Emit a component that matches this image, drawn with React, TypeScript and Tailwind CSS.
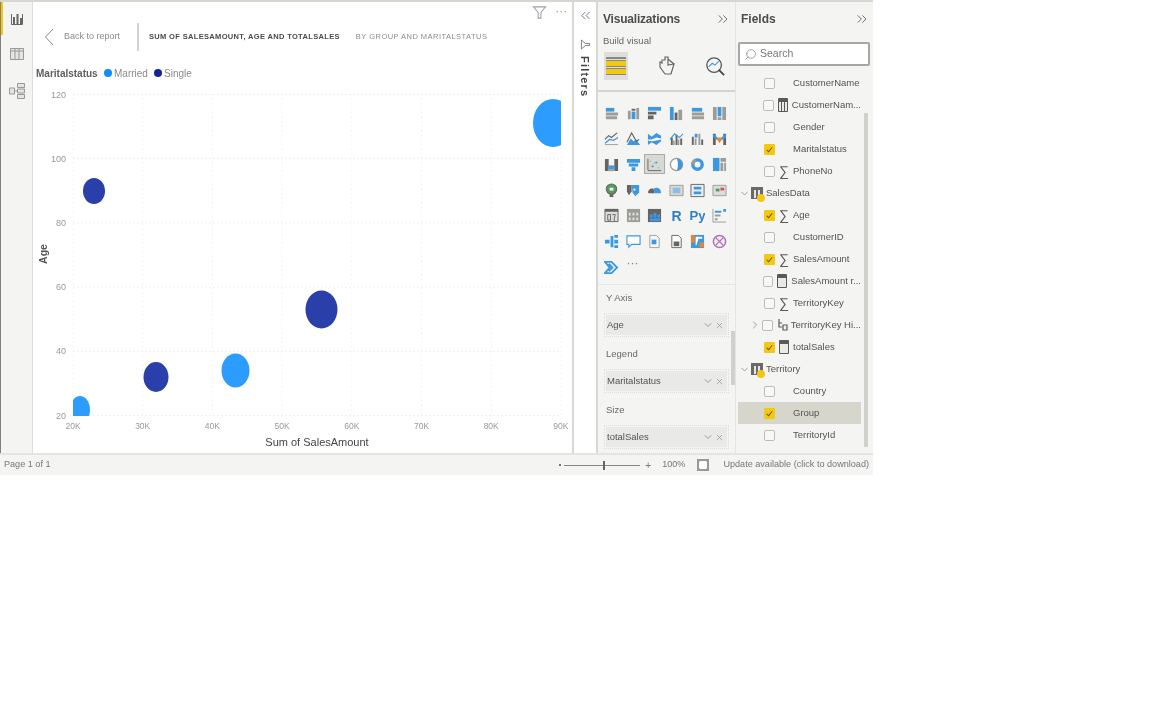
import React from "react";
import { ChevronDown, ChevronRight, ChevronsLeft, ChevronsRight, Search, X } from "lucide-react";

const GRAY = "#9c9c98";
const DARK = "#666462";
const BLUE = "#3c98e0";

const FilterGlyph = ({ className }: { className?: string }) => (
  <svg viewBox="0 0 16 16" className={className} fill="none" stroke="currentColor" strokeWidth="1.1">
    <path d="M1.5 2h13L9.5 8v6h-3V8z" />
  </svg>
);

const i = (shapes: React.ReactNode) => shapes;

// gallery of visual types, row by row
const vizIcons: React.ReactNode[] = [
  i(<><path fill={BLUE} d="M2 2h9v4H2z" /><path fill={GRAY} d="M2 7h13v3H2zM2 11h12v3H2z" /></>),
  i(<><path fill={GRAY} d="M2 5h3v9H2zM11 2h3v12h-3z" /><path fill={BLUE} d="M6 6h4v8H6z" /><path fill={DARK} d="M6 3h4v2H6z" /></>),
  i(<><path fill={BLUE} d="M1 1h14v4H1z" /><path fill={DARK} d="M1 6h9v3H1zM1 10h6v4H1z" /></>),
  i(<><path fill={BLUE} d="M1 1h4v14H1z" /><path fill={DARK} d="M6 7h3v8H6z" /><path fill={GRAY} d="M10 4h4v11h-4z" /></>),
  i(<><path fill={BLUE} d="M2 2h11v4H2z" /><path fill={GRAY} d="M2 7h13v3H2zM2 11h13v3H2z" /></>),
  i(<><path fill={BLUE} d="M6 1h4v10H6z" /><path fill={GRAY} d="M1 1h4v14H1zM11 1h4v14h-4zM6 12h4v3H6z" /></>),
  i(<><path fill="none" stroke={DARK} strokeWidth="1.3" d="M1 9l4-4 3 2 6-5" /><path fill="none" stroke={BLUE} strokeWidth="1.3" d="M1 13l5-4 4 1 5-3" /><path fill={GRAY} d="M1 14h14v1H1z" /></>),
  i(<><path fill={BLUE} d="M1 15l4-7 3 3 3-2 4 6z" /><path fill="none" stroke={DARK} strokeWidth="1.2" d="M1 12l5-10 5 9 3-2" /></>),
  i(<><path fill={BLUE} d="M1 3l4 3 5-4 5 3v6l-5 4-5-3-4 3z" /><path fill="#fff" d="M1 9l4 0 5-2 5 1v1l-5 1-5 1-4-1z" /></>),
  i(<><path fill={DARK} d="M2 7h2v8H2zM7 4h2v11H7zM12 8h2v7h-2z" /><path fill={GRAY} d="M4 10h2v5H4zM9 9h2v6H9z" /><path fill="none" stroke={BLUE} strokeWidth="1.2" d="M1 9l5-6 5 4 4-4" /></>),
  i(<><path fill={DARK} d="M2 6h2v9H2zM12 9h2v6h-2z" /><path fill={GRAY} d="M5 8h2v7H5zM9 3h2v12H9z" /><path fill={BLUE} d="M5 3h3v4H5z" /></>),
  i(<><path fill={DARK} d="M1 3h3v12H1zM12 3h3v12h-3z" /><path fill={BLUE} d="M1 3l5 4v3L1 6zM15 3l-5 4v3l5-3z" /><path fill="#e8862e" d="M5 8l3 5 3-5-1-1H6z" /></>),
  i(<><path fill={DARK} d="M1 2h4v13H1zM11 2h4v13h-4z" /><path fill={BLUE} d="M5 9h6v4H5z" /><path fill={GRAY} d="M5 13h6v2H5z" /></>),
  i(<><path fill={BLUE} d="M1 2h14v4H1zM3 7h10v3H3zM6 11h4v4H6z" /></>),
  i(<><path fill="none" stroke={DARK} d="M1 14V2M1 14.5h14" /><path fill={BLUE} d="M5 9h2v2H5zM9 5h2v2H9zM7 6h1v1H7z" /><path fill={GRAY} d="M3 4h1v1H3zM12 11h1v1h-1z" /></>),
  i(<><circle cx="8" cy="8" r="6.5" fill="#fff" stroke={GRAY} strokeWidth="1.4" /><path fill={BLUE} d="M8 1.5a6.5 6.5 0 0 1 0 13c2-2 2-11 0-13z" /></>),
  i(<><circle cx="8" cy="8" r="5" fill="none" stroke={BLUE} strokeWidth="3.6" /><path fill="none" stroke={GRAY} strokeWidth="3.6" d="M3 8a5 5 0 0 1 3-4.5" /></>),
  i(<><path fill={BLUE} d="M1 1h7v14H1z" /><path fill={GRAY} d="M9 1h6v4H9zM9 6h3v9H9zM13 6h2v9h-2z" /></>),
  i(<><circle cx="8" cy="6.5" r="5.5" fill="#4f9e5c" /><circle cx="8" cy="6.5" r="5.5" fill="none" stroke={DARK} strokeWidth="1.2" /><path fill={DARK} d="M6 12h4v3H6z" /><path fill="#fff" d="M6 5h4v3H6z" /></>),
  i(<><path fill={BLUE} d="M6 2h8v8l-4 4-3-4z" /><path fill={DARK} d="M1 2h5v7l-3 4-2-4z" /><path fill="#fff" d="M8 6h2v2H8z" /></>),
  i(<><path fill={DARK} d="M1 10c0-3 3-5 6-4l1 5H2z" /><path fill={BLUE} d="M7 6c3-2 8-1 8 5H8z" /></>),
  i(<><path fill="#d8d8d4" stroke={GRAY} d="M1 2.5h14v11H1z" /><path fill="#8bbde8" d="M4 5h8v6H4z" /></>),
  i(<><path fill="#eee" stroke={DARK} d="M1 1.5h14v13H1z" /><path fill={BLUE} d="M4 4h8v3H4zM4 9h8v3H4z" /></>),
  i(<><path fill="#ddd" stroke={GRAY} d="M1 2.5h14v11H1z" /><path fill="#d9534f" d="M9 5h4v3H9z" /><path fill="#4f9e5c" d="M4 6h4v3H4z" /></>),
  i(<><path fill="#ddd" stroke={DARK} d="M1 1.5h14v13H1z" /><path fill={DARK} d="M1 1h14v3H1z" /><path fill="none" stroke={DARK} d="M4 7h3v6H4zM9 7h3l-1 4v3" /></>),
  i(<><path fill={GRAY} d="M1 1h14v14H1z" /><path fill="#e4e4e0" d="M3 5h2v3H3zM7 5h2v3H7zM11 5h2v3h-2zM3 10h2v3H3zM7 10h2v3H7zM11 10h2v3h-2z" /></>),
  i(<><path fill={DARK} d="M1 1h14v14H1z" /><path fill={BLUE} d="M3 7h3v3H3zM7 5h3v5H7zM11 7h3v3h-3zM3 11h11v3H3z" /></>),
  i(<text x="8" y="14" textAnchor="middle" fontSize="15" fontWeight="700" fill="#2f7fc6" fontFamily="Liberation Sans, sans-serif">R</text>),
  i(<text x="8" y="13" textAnchor="middle" fontSize="14" fontWeight="700" fill="#2f7fc6" fontFamily="Liberation Sans, sans-serif">Py</text>),
  i(<><path fill="none" stroke={GRAY} d="M1 1v14h14" /><path fill={BLUE} d="M3 3h7v2H3zM12 1h3v3h-3z" /><path fill={GRAY} d="M3 7h6v2H3zM3 11h3v2H3z" /></>),
  i(<><path fill={BLUE} d="M1 6h5v4H1zM7 2h3v12H7zM11 1h4v3h-4zM11 6h4v4h-4zM11 12h4v3h-4z" /></>),
  i(<path fill="#fff" stroke={BLUE} strokeWidth="1.2" d="M1 2h14v9H6l-3 3v-3H1z" />),
  i(<><path fill="#f6f6f6" stroke={GRAY} d="M3 1.5h7l3 3v10H3z" /><path fill={BLUE} d="M5 6h5v5H5z" /></>),
  i(<><path fill="#fff" stroke={DARK} d="M3 1.5h7l3 3v10H3z" /><path fill={DARK} d="M5 8h6v5H5z" /></>),
  i(<><path fill={BLUE} d="M1 1h14v14H1z" /><path fill="#e8862e" d="M1 1h4v8H1zM10 9h5v5h-5z" /><path fill="#fff" d="M6 3h7v2H9l-2 7H6z" /></>),
  i(<><circle cx="8" cy="8" r="6.5" fill="none" stroke="#b36ec0" strokeWidth="1.6" /><path fill="none" stroke="#b36ec0" strokeWidth="1.2" d="M4 4l8 8M12 4l-8 8" /></>),
  i(<path fill="none" stroke={BLUE} strokeWidth="2" d="M1 2h7l6 6-6 6H1l5-6zM5 4l4 4-4 4" />),
];

type FieldIcon = "sigma" | "calc" | "col" | "hier";
interface FieldRow {
  name: string;
  checked?: boolean;
  icon?: FieldIcon;
  group?: boolean;
  expander?: boolean;
  active?: boolean;
}

const fieldRows: FieldRow[] = [
  { name: "CustomerName" },
  { name: "CustomerNam...", icon: "col" },
  { name: "Gender" },
  { name: "Maritalstatus", checked: true },
  { name: "PhoneNo", icon: "sigma" },
  { name: "SalesData", group: true },
  { name: "Age", checked: true, icon: "sigma" },
  { name: "CustomerID" },
  { name: "SalesAmount", checked: true, icon: "sigma" },
  { name: "SalesAmount r...", icon: "calc" },
  { name: "TerritoryKey", icon: "sigma" },
  { name: "TerritoryKey Hi...", icon: "hier", expander: true },
  { name: "totalSales", checked: true, icon: "calc" },
  { name: "Territory", group: true },
  { name: "Country" },
  { name: "Group", checked: true, active: true },
  { name: "TerritoryId" },
];

const TableGlyph = ({ className }: { className?: string }) => (
  <svg viewBox="0 0 12 12" className={className}>
    <path fill="#6b6a68" d="M0 0h12v12H0z" />
    <path fill="#e6e6e2" d="M3 3h2v8H3zM7 3h2v8H7z" />
  </svg>
);

const RowIcon = ({ icon }: { icon: FieldIcon }) => {
  if (icon === "sigma") {
    return <span className="w-[12px] text-center text-[14px] leading-none text-[#5c5a58]">∑</span>;
  }
  return (
    <svg viewBox="0 0 12 14" className="h-[14px] w-[12px]">
      {icon === "hier" ? (
        <path fill="none" stroke="#5c5a58" strokeWidth="1.2" d="M3 1v8h3M6 5H3M7 7h4v5H7z" />
      ) : (
        <>
          <path fill="#e9e9e5" stroke="#5c5a58" d="M1.5.5h9v13h-9z" />
          <path fill="#5c5a58" d="M2 1h8v3H2z" />
          {icon === "col" && <path fill="#5c5a58" d="M4 4h1v9H4zM7 4h1v9H7z" />}
        </>
      )}
    </svg>
  );
};

const FieldItem = ({ row }: { row: FieldRow }) => {
  if (row.group) {
    return (
      <div className="flex h-[22px] items-center pl-[1px]">
        <ChevronDown className="h-[11px] w-[11px] text-[#777]" strokeWidth={1.4} />
        <span className="relative ml-[1px] h-[12px] w-[12px]">
          <TableGlyph className="h-[12px] w-[12px]" />
          <span className="absolute left-[6px] top-[7px] h-[8px] w-[8px] rounded-full bg-[#f2c811]" />
        </span>
        <span className="ml-[3px] text-[#55534f]">{row.name}</span>
      </div>
    );
  }
  return (
    <div className={`flex h-[22px] items-center ${row.active ? "bg-[#d6d6cd]" : ""}`}>
      <span className="flex w-[26px] justify-end pr-[1px]">
        {row.expander && <ChevronRight className="h-[12px] w-[12px] text-[#777]" strokeWidth={1.4} />}
      </span>
      {row.checked ? (
        <span className="flex h-[11px] w-[11px] items-center justify-center rounded-[1px] bg-[#f2c811]">
          <svg viewBox="0 0 10 10" className="h-[9px] w-[9px]">
            <path fill="none" stroke="#6b5a10" strokeWidth="1.2" d="M2 5.5l2 2 4-5" />
          </svg>
        </span>
      ) : (
        <span className="h-[11px] w-[11px] rounded-[2px] border-[1.5px] border-[#bcbcb8] bg-[#f8f8f8]" />
      )}
      <span className="ml-[3px] flex w-[12px] justify-center">{row.icon && <RowIcon icon={row.icon} />}</span>
      <span className="ml-[3px] whitespace-nowrap text-[#55534f]">{row.name}</span>
    </div>
  );
};

const Well = ({ label, value }: { label: string; value: string }) => (
  <div>
    <div className="h-[22px] pl-[8px] text-[9.5px] leading-[13px] text-[#6a6866]">{label}</div>
    <div className="mx-[6px] mb-[10px] border border-dotted border-[#ddd] p-[1px]">
      <div className="flex h-[20px] items-center bg-[#e9e9e7] pl-[1px] pr-[3px] text-[9.5px] text-[#55534f]">
        <span className="flex-1">{value}</span>
        <ChevronDown className="h-[12px] w-[12px] text-[#777]" strokeWidth={1.4} />
        <X className="ml-[1px] h-[9px] w-[9px] text-[#777]" strokeWidth={1.4} />
      </div>
    </div>
  </div>
);

const xTicks = ["20K", "30K", "40K", "50K", "60K", "70K", "80K", "90K"];
const yTicks = [120, 100, 80, 60, 40, 20];
const bubbles = [
  { cx: 553, cy: 123, rx: 20, ry: 24, fill: "#2c9cff" },
  { cx: 94, cy: 191, rx: 11, ry: 13, fill: "#2b3faa" },
  { cx: 156, cy: 377, rx: 12.5, ry: 15, fill: "#2b3faa" },
  { cx: 235.5, cy: 370.5, rx: 14, ry: 17, fill: "#2c9cff" },
  { cx: 321.5, cy: 309.5, rx: 16, ry: 19, fill: "#2b3faa" },
  { cx: 80, cy: 410, rx: 10, ry: 14, fill: "#2c9cff" },
];

const ScatterChart = () => (
  <svg viewBox="33 84 539 369" className="h-[369px] w-[539px]" fontFamily="Liberation Sans, sans-serif">
    <defs>
      <clipPath id="plot">
        <rect x="73" y="94" width="488" height="322" />
      </clipPath>
    </defs>
    {xTicks.map((t, n) => {
      const x = 73 + n * 69.7;
      return (
        <g key={t}>
          <line x1={x} x2={x} y1="94" y2="416" stroke="#f0f0f0" strokeDasharray="1.5 3" />
          <text x={x} y="429" textAnchor="middle" fontSize="8.5" fill="#999">{t}</text>
        </g>
      );
    })}
    {yTicks.map((t, n) => {
      const y = 94.5 + n * 64.2;
      return (
        <g key={t}>
          <line x1="73" x2="561" y1={y} y2={y} stroke="#ebebeb" strokeDasharray="1.5 2.5" />
          <text x="66" y={y + 3} textAnchor="end" fontSize="9" fill="#999">{t}</text>
        </g>
      );
    })}
    <g clipPath="url(#plot)">
      {bubbles.map((b) => (
        <ellipse key={b.cx} cx={b.cx} cy={b.cy} rx={b.rx} ry={b.ry} fill={b.fill} />
      ))}
    </g>
    <text x="317" y="446" textAnchor="middle" fontSize="11" fill="#444">Sum of SalesAmount</text>
    <text transform="translate(47 254) rotate(-90)" textAnchor="middle" fontSize="10.5" fontWeight="700" fill="#555">Age</text>
  </svg>
);

export default function App() {
  return (
    <div
      className="flex h-[475px] w-[873px] flex-col bg-[#f4f4f3] text-[9.5px] blur-[0.6px]"
      style={{ fontFamily: "'Liberation Sans', sans-serif" }}
    >
      <div className="h-[2px] shrink-0 bg-[#d5d8d0]" />
      <div className="flex h-[451px] shrink-0">
        {/* left rail */}
        <div className="flex w-[33px] flex-col border-l border-r border-l-[#808080] border-r-[#dcdcd8]">
          <div className="flex h-[33px] items-center justify-center border-l-2 border-[#f2c811] pr-[1px]">
            <svg viewBox="0 0 14 14" className="h-[14px] w-[14px]">
              <path fill="none" stroke="#666" d="M1.5 2v10.5h11V2" />
              <path fill="#666" d="M3 5h2v7H3zM6.5 2h2v10h-2zM10 6h2v6h-2z" />
            </svg>
          </div>
          <div className="flex h-[37px] items-center justify-center">
            <svg viewBox="0 0 14 14" className="h-[14px] w-[14px]">
              <path fill="#e4e4e2" stroke="#999" d="M.5 1.5h13v11H.5z" />
              <path stroke="#999" d="M.5 4h13M5 1.5v11M9 1.5v11" />
            </svg>
          </div>
          <div className="flex h-[37px] items-center justify-center">
            <svg viewBox="0 0 16 16" className="h-[16px] w-[16px]">
              <path fill="#e4e4e2" stroke="#999" d="M8.5.5h7v4h-7zM8.5 6h7v4h-7zM8.5 11.5h7v4h-7zM.5 5h5v6h-5z" />
              <path stroke="#999" d="M5.5 8h3" />
            </svg>
          </div>
        </div>

        {/* report canvas */}
        <div className="relative w-[539px] bg-white">
          <div className="absolute right-[4px] top-[3px] flex items-center gap-[9px] text-[#a0a0a0]">
            <FilterGlyph className="h-[15px] w-[15px]" />
            <span className="text-[9px] font-bold leading-none tracking-[1px]">···</span>
          </div>
          <div className="flex h-[60px] items-center pl-[11px] pt-[10px]">
            <svg viewBox="0 0 10 18" className="h-[18px] w-[10px]">
              <path fill="none" stroke="#8a8a8a" strokeWidth="1" d="M9 1L1.5 9 9 17" />
            </svg>
            <span className="ml-[10px] w-[73px] text-[9px] text-[#8c8c8c]">Back to report</span>
            <span className="h-[28px] w-[2px] bg-[#d2d2d2]" />
            <span className="ml-[10px] text-[7.5px] font-bold tracking-[0.34px] text-[#4a4a4a]">
              SUM OF SALESAMOUNT, AGE AND TOTALSALES
            </span>
            <span className="ml-[16px] text-[7.5px] tracking-[0.47px] text-[#8c8c8c]">BY GROUP AND MARITALSTATUS</span>
          </div>
          <div className="flex h-[22px] items-center pl-[3px] text-[10px] text-[#8a8a8a]">
            <span className="w-[68px] font-bold text-[#5e5e5e]">Maritalstatus</span>
            <span className="mr-[2px] h-[8px] w-[8px] rounded-full bg-[#118dff]" />
            <span className="w-[40px]">Married</span>
            <span className="mr-[2px] h-[8px] w-[8px] rounded-full bg-[#12239e]" />
            <span>Single</span>
          </div>
          <ScatterChart />
        </div>

        {/* filters strip */}
        <div className="flex w-[26px] flex-col items-center border-x-2 border-x-[#d8d8d2] bg-white pt-[6px]">
          <ChevronsLeft className="h-[15px] w-[15px] text-[#666]" strokeWidth={1.4} />
          <FilterGlyph className="mt-[16px] h-[11px] w-[11px] -rotate-90 text-[#555]" />
          <span className="mt-[6px] text-[11px] font-bold tracking-[1.2px] text-[#444] [writing-mode:vertical-rl]">Filters</span>
        </div>

        {/* visualizations */}
        <div className="relative flex w-[137px] flex-col overflow-hidden">
          <div className="flex h-[31px] shrink-0 items-center justify-between pl-[5px] pr-[4px] pt-[3px]">
            <span className="text-[12px] font-bold tracking-[-0.2px] text-[#4f4d4b]">Visualizations</span>
            <ChevronsRight className="h-[16px] w-[16px] text-[#666]" strokeWidth={1.4} />
          </div>
          <div className="h-[17px] shrink-0 pl-[5px] text-[9.5px] leading-[16px] text-[#666]">Build visual</div>
          <div className="flex h-[42px] shrink-0 items-start border-b-2 border-[#d5d5d0] pl-[6px] pt-[2px]">
            <div className="flex h-[28px] w-[24px] flex-col justify-center gap-[1px] bg-[#dfdfd9] px-[2px]">
              <span className="h-[2px] bg-[#888]" />
              <span className="h-[7px] border-y border-[#888] bg-[#f2c811]" />
              <span className="h-[7px] border-y border-[#888] bg-[#f2c811]" />
            </div>
            <svg viewBox="0 0 20 22" className="ml-[29px] mt-[3px] h-[22px] w-[20px]">
              <path fill="none" stroke="#666" strokeWidth="1.2" d="M8 2h3v8l6-1-3 10H8L3 12V7l2 1V5h3zM11 4l6 5" />
            </svg>
            <svg viewBox="0 0 22 22" className="ml-[28px] mt-[3px] h-[22px] w-[20px]">
              <circle cx="10" cy="10" r="8" fill="#f6f6f6" stroke="#555" strokeWidth="1.4" />
              <path fill="none" stroke="#3c98e0" strokeWidth="1.2" d="M4 12l4-4 3 2 4-4" />
              <path stroke="#444" strokeWidth="2" d="M15 15l6 6" />
            </svg>
          </div>

          <div className="h-[193px] shrink-0 border-b border-[#e6e6e3] pt-[11px]">
            <div className="grid auto-rows-[25.7px] grid-cols-[repeat(6,21.5px)] pl-[3px]">
              {vizIcons.map((icon, n) => (
                <div key={n} className="flex items-start justify-center pt-[1px]">
                  <span className={`flex h-[18px] w-[19px] items-center justify-center ${n === 14 ? "bg-[#d9d9d3] outline outline-[#aaa]" : ""}`}>
                    <svg viewBox="0 0 16 16" className="h-[15px] w-[15px]">{icon}</svg>
                  </span>
                </div>
              ))}
              <div className="flex items-start justify-center pt-[3px] text-[9px] font-bold leading-none tracking-[1px] text-[#888]">···</div>
            </div>
          </div>

          <div className="shrink-0 pt-[6px]">
            <Well label="Y Axis" value="Age" />
            <Well label="Legend" value="Maritalstatus" />
            <Well label="Size" value="totalSales" />
          </div>
          <div className="absolute bottom-[68px] right-[0px] h-[54px] w-[4px] bg-[#d0d0cc]" />
        </div>

        {/* fields */}
        <div className="relative flex w-[138px] flex-col border-l border-[#e4e4e0]">
          <div className="flex h-[31px] shrink-0 items-center justify-between pl-[5px] pr-[3px] pt-[3px]">
            <span className="text-[12px] font-bold text-[#4f4d4b]">Fields</span>
            <ChevronsRight className="h-[16px] w-[16px] text-[#666]" strokeWidth={1.4} />
          </div>
          <div className="ml-[2px] mr-[3px] mt-[9px] flex h-[24px] shrink-0 items-center rounded-[2px] border-2 border-[#a6a6a2] bg-white pl-[4px] text-[10.5px] text-[#777]">
            <Search className="h-[13px] w-[13px] -scale-x-100 text-[#777]" strokeWidth={1.2} />
            <span className="ml-[3px]">Search</span>
          </div>
          <div className="ml-[2px] mt-[6px] w-[123px] overflow-hidden">
            {fieldRows.map((row) => (
              <FieldItem key={row.name} row={row} />
            ))}
          </div>
          <div className="absolute bottom-[6px] right-[5px] h-[334px] w-[4px] bg-[#d0d0cc]" />
        </div>
      </div>

      {/* status bar */}
      <div className="flex h-[22px] shrink-0 items-center border-t-2 border-[#e4e4e2] pl-[4px] pr-[4px] text-[9.1px] text-[#777]">
        <span>Page 1 of 1</span>
        <span className="ml-auto mr-[3px] h-[2px] w-[2px] bg-[#777]" />
        <div className="relative h-[1px] w-[76px] bg-[#888]">
          <span className="absolute left-[39px] top-[-4px] h-[9px] w-[2px] bg-[#666]" />
        </div>
        <span className="ml-[5px] text-[10px]">+</span>
        <span className="ml-[11px]">100%</span>
        <svg viewBox="0 0 12 12" className="ml-[12px] h-[12px] w-[12px]">
          <path fill="#999" d="M0 0h12v12H0z" />
          <path fill="#fff" d="M2 3l1-1h6l1 1v6l-1 1H3l-1-1z" />
        </svg>
        <span className="ml-[14px]">Update available (click to download)</span>
      </div>
    </div>
  );
}
